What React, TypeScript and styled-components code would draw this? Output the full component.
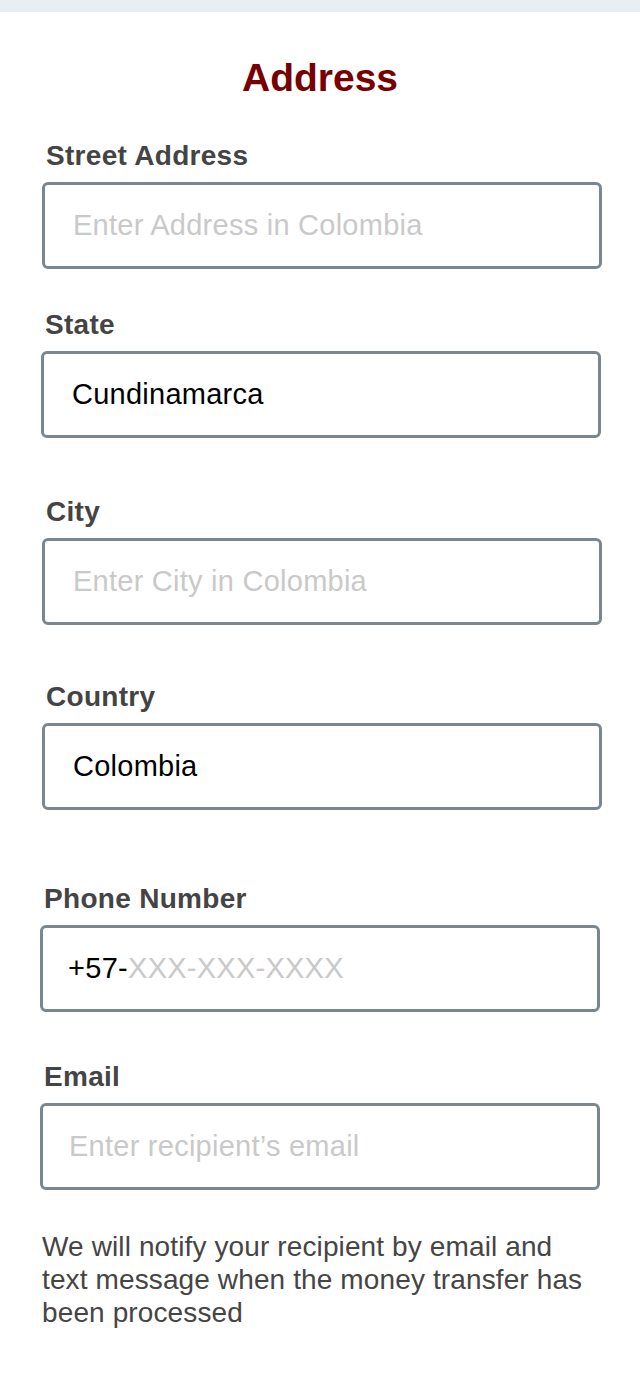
import React from "react";
import styled, { createGlobalStyle } from "styled-components";

const GlobalStyle = createGlobalStyle`
  html, body {
    margin: 0;
    padding: 0;
    background: #ffffff;
  }
  body {
    font-family: "Liberation Sans", Arial, sans-serif;
    -webkit-font-smoothing: antialiased;
  }
  * { box-sizing: border-box; }
`;

const Page = styled.div`
  width: 640px;
  min-height: 1388px;
  background: #ffffff;
  display: flex;
  flex-direction: column;
`;

const TopBar = styled.div`
  height: 12px;
  background: #e9eef2;
`;

const Content = styled.main`
  display: flex;
  flex-direction: column;
`;

const Title = styled.h1`
  margin: 43px 0 0;
  height: 45px;
  font-size: 39px;
  line-height: 45px;
  font-weight: 700;
  color: #780000;
  text-align: center;
`;

const Field = styled.div<{ $top: number; $shift: number }>`
  display: flex;
  flex-direction: column;
  margin-top: ${(p) => p.$top}px;
  margin-left: ${(p) => p.$shift}px;
  width: 560px;
`;

const Label = styled.label`
  display: block;
  padding-left: 4px;
  margin-bottom: 10px;
  font-size: 28px;
  line-height: 32px;
  font-weight: 700;
  letter-spacing: 0.3px;
  color: #444444;
`;

const InputBox = styled.div<{ $pad: number }>`
  display: flex;
  align-items: center;
  height: 87px;
  padding: 0 20px 0 ${(p) => p.$pad}px;
  border: 3px solid #7b868f;
  border-radius: 6px;
  background: #ffffff;
`;

const Prefix = styled.span`
  font-size: 29px;
  letter-spacing: 0.3px;
  color: #000000;
  white-space: nowrap;
`;

const TextInput = styled.input`
  flex: 1;
  min-width: 0;
  border: none;
  outline: none;
  background: transparent;
  padding: 0;
  margin: 0;
  font-family: "Liberation Sans", Arial, sans-serif;
  font-size: 29px;
  letter-spacing: 0.25px;
  color: #000000;

  &::placeholder {
    color: #c9c9c9;
    opacity: 1;
  }
`;

const Note = styled.p`
  margin: 40px 0 0 42px;
  width: 556px;
  font-size: 28px;
  line-height: 33px;
  letter-spacing: 0.12px;
  color: #454545;
`;

type FieldDef = {
  label: string;
  top: number;
  shift: number;
  pad: number;
  placeholder?: string;
  value?: string;
  prefix?: string;
};

const fields: FieldDef[] = [
  { label: "Street Address", top: 40, shift: 42, pad: 28, placeholder: "Enter Address in Colombia" },
  { label: "State", top: 40, shift: 41, pad: 28, value: "Cundinamarca" },
  { label: "City", top: 58, shift: 42, pad: 28, placeholder: "Enter City in Colombia" },
  { label: "Country", top: 56, shift: 42, pad: 28, value: "Colombia" },
  { label: "Phone Number", top: 73, shift: 40, pad: 25, prefix: "+57-", placeholder: "XXX-XXX-XXXX" },
  { label: "Email", top: 49, shift: 40, pad: 26, placeholder: "Enter recipient’s email" },
];

export default function App() {
  return (
    <>
      <GlobalStyle />
      <Page>
        <TopBar />
        <Content>
          <Title>Address</Title>
          {fields.map((f) => (
            <Field key={f.label} $top={f.top} $shift={f.shift}>
              <Label>{f.label}</Label>
              <InputBox $pad={f.pad}>
                {f.prefix && <Prefix>{f.prefix}</Prefix>}
                <TextInput
                  placeholder={f.placeholder}
                  defaultValue={f.value}
                  aria-label={f.label}
                />
              </InputBox>
            </Field>
          ))}
          <Note>
            We will notify your recipient by email and text message when the
            money transfer has been processed
          </Note>
        </Content>
      </Page>
    </>
  );
}
